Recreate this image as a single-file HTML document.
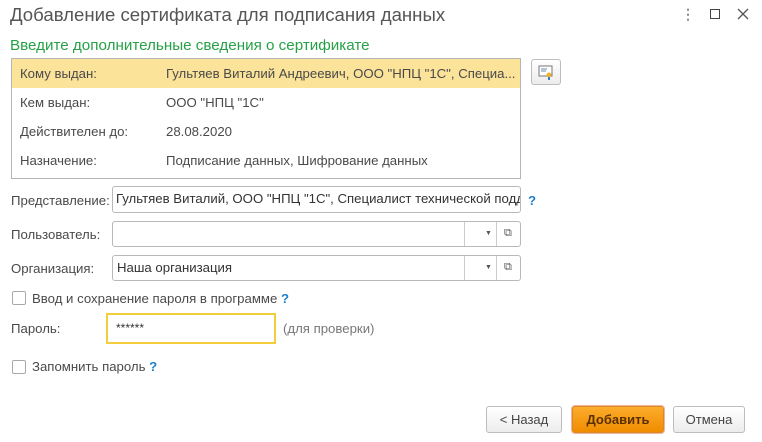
<!DOCTYPE html>
<html><head><meta charset="utf-8"><style>
*{box-sizing:border-box;margin:0;padding:0}
body{width:762px;height:442px;background:#fff;font-family:"Liberation Sans",Arial,sans-serif;font-size:13.2px;color:#4a4a4a;position:relative;overflow:hidden}
.a{position:absolute;white-space:nowrap}
.inp{position:absolute;border:1px solid #b8b8b8;border-radius:3px;background:#fff;height:26px;line-height:24px;padding-left:4px;overflow:hidden;white-space:nowrap;color:#333}
.sep{position:absolute;top:0;bottom:0;width:1px;background:#ccc}
.cb{position:absolute;width:14px;height:14px;border:1px solid #aaa;border-radius:2px;background:#fff}
.q{color:#1e7fc8;font-weight:bold}
.btn{position:absolute;height:27px;border:1px solid #bdbdbd;border-radius:3px;background:linear-gradient(#fff,#ececec);text-align:center;line-height:25px;color:#444;font-size:13px}
</style></head><body>
<div class="a" style="left:10px;top:4px;font-size:18.6px;color:#555">Добавление сертификата для подписания данных</div>
<div class="a" style="left:681px;top:6px;font-size:14px;color:#888;font-weight:bold">⋮</div>
<div class="a" style="left:710px;top:9px;width:10px;height:10px;border:1.5px solid #444"></div>
<svg class="a" style="left:737px;top:8px" width="12" height="12"><path d="M1 1L11 11M11 1L1 11" stroke="#555" stroke-width="1.3"/></svg>
<div class="a" style="left:10px;top:37px;font-size:15.2px;color:#27a147">Введите дополнительные сведения о сертификате</div>
<div class="a" style="left:11px;top:58px;width:510px;height:121px;border:1px solid #b5b5b5"></div>
<div class="a" style="left:12px;top:59px;width:508px;height:29px;background:#fbe39a"></div>
<div class="a" style="left:20px;top:66px">Кому выдан:</div><div class="a" style="left:166px;top:66px">Гультяев Виталий Андреевич, ООО "НПЦ "1С", Специа...</div>
<div class="a" style="left:20px;top:95px">Кем выдан:</div><div class="a" style="left:166px;top:95px">ООО "НПЦ "1С"</div>
<div class="a" style="left:20px;top:124px">Действителен до:</div><div class="a" style="left:166px;top:124px">28.08.2020</div>
<div class="a" style="left:20px;top:153px">Назначение:</div><div class="a" style="left:166px;top:153px">Подписание данных, Шифрование данных</div>
<div class="btn" style="left:531px;top:59px;width:30px;height:26px"><svg width="16" height="16" style="margin-top:4px"><rect x="1" y="2" width="13" height="10" fill="#fff" stroke="#777"/><path d="M3 5h6M3 7h5" stroke="#6a8ab5"/><circle cx="11" cy="11" r="2.5" fill="#f0b030"/><rect x="10" y="13" width="2" height="3" fill="#3a7bc8"/></svg></div>
<div class="a" style="left:11px;top:193px">Представление:</div>
<div class="inp" style="left:112px;top:186px;width:409px;height:27px;padding-left:3px">Гультяев Виталий, ООО "НПЦ "1С", Специалист технической поддержки</div>
<div class="a q" style="left:528px;top:193px">?</div>
<div class="a" style="left:11px;top:227px">Пользователь:</div>
<div class="inp" style="left:112px;top:221px;width:409px"><div class="sep" style="left:351px"></div><div class="sep" style="left:383px"></div><div class="a" style="left:372px;top:0;font-size:7px;color:#555">▼</div><div class="a" style="left:391px;top:-1px;font-size:11px;color:#555">⧉</div></div>
<div class="a" style="left:11px;top:261px">Организация:</div>
<div class="inp" style="left:112px;top:255px;width:409px">Наша организация<div class="sep" style="left:351px"></div><div class="sep" style="left:383px"></div><div class="a" style="left:372px;top:0;font-size:7px;color:#555">▼</div><div class="a" style="left:391px;top:-1px;font-size:11px;color:#555">⧉</div></div>
<div class="cb" style="left:12px;top:291px"></div>
<div class="a" style="left:32px;top:291px">Ввод и сохранение пароля в программе <span class="q">?</span></div>
<div class="a" style="left:11px;top:321px">Пароль:</div>
<div class="a" style="left:106px;top:313px;width:170px;height:31px;border:2px solid #f2cd3c;padding:6px 0 0 8px;font-size:12px;color:#333">******</div>
<div class="a" style="left:283px;top:321px;color:#777">(для проверки)</div>
<div class="cb" style="left:12px;top:360px"></div>
<div class="a" style="left:32px;top:359px">Запомнить пароль <span class="q">?</span></div>
<div class="btn" style="left:486px;top:406px;width:76px">&lt; Назад</div>
<div class="btn" style="left:572px;top:406px;width:92px;background:linear-gradient(#fcac2c,#f08c00);border-color:#d88a2a;color:#5a3000;font-weight:bold;box-shadow:0 0 0 1px #f6b3a0">Добавить</div>
<div class="btn" style="left:673px;top:406px;width:72px">Отмена</div>
</body></html>
